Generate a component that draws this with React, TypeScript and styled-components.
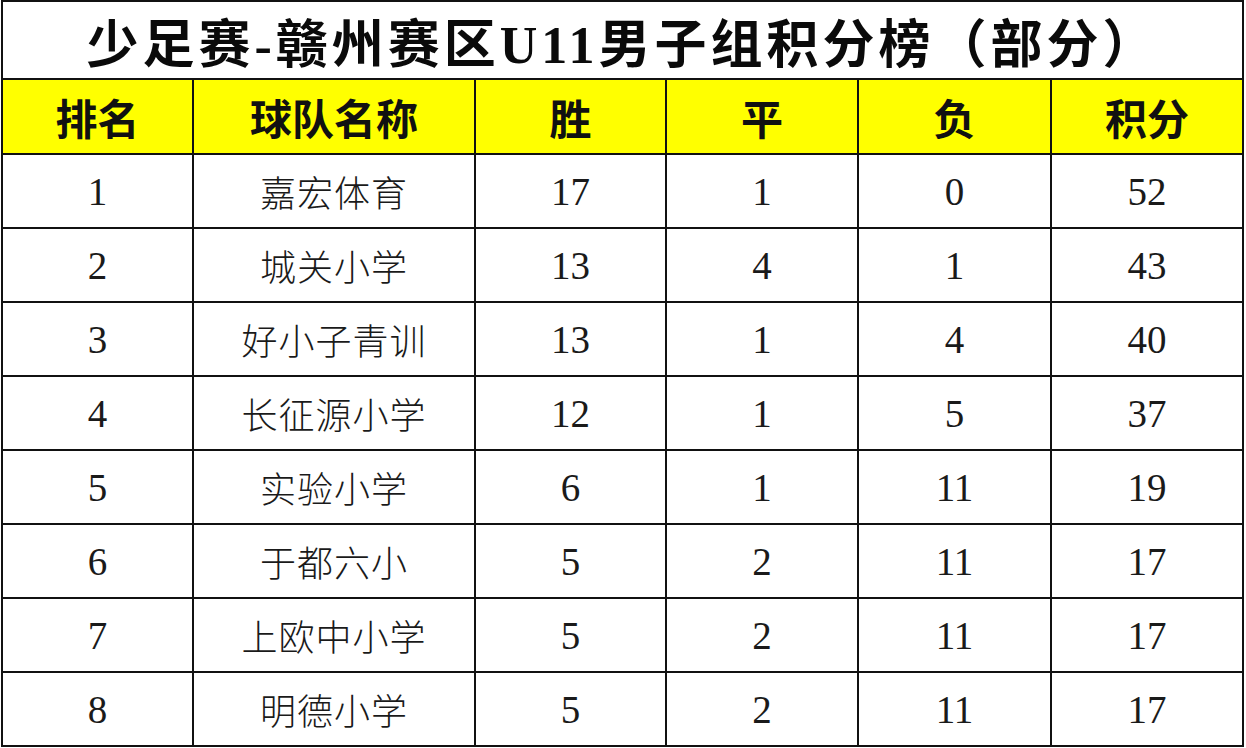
import * as React from 'react';
import styled, { createGlobalStyle } from 'styled-components';

const GlobalStyle = createGlobalStyle`
    html, body {
        margin: 0;
        padding: 0;
        background: #ffffff;
    }
`;

const Page = styled.div`
    padding: 0 0 0 1px;
    width: 1246px;
    height: 748px;
    box-sizing: border-box;
    overflow: hidden;
`;

const Table = styled.table`
    width: 1243px;
    border-collapse: collapse;
    table-layout: fixed;
    border: 2px solid #111;
`;

const TitleCell = styled.th`
    height: 76px;
    padding: 0;
    border: 2px solid #111;
    font-family: "Liberation Serif", "Noto Sans CJK SC", serif;
    font-weight: 700;
    font-size: 52px;
    letter-spacing: 4px;
    color: #0a0a0a;
    text-align: center;
    vertical-align: middle;
`;

const HeadCell = styled.th`
    height: 73px;
    padding: 0;
    border: 2px solid #111;
    background: #ffff00;
    font-family: "Liberation Serif", "Noto Sans CJK SC", serif;
    font-weight: 700;
    font-size: 42px;
    color: #111;
    text-align: center;
    vertical-align: middle;
`;

const Cell = styled.td<{ $cjk?: boolean }>`
    height: 72px;
    padding: 0;
    border: 2px solid #111;
    font-family: ${(p) => (p.$cjk ? '"Noto Sans CJK SC", sans-serif' : '"Liberation Serif", serif')};
    font-weight: ${(p) => (p.$cjk ? 300 : 400)};
    font-size: ${(p) => (p.$cjk ? '36px' : '39px')};
    letter-spacing: ${(p) => (p.$cjk ? '1px' : '0')};
    color: #1a1a1a;
    text-align: center;
    vertical-align: middle;
`;

const widths = [191, 282, 191, 192, 193, 192];
const headers = ['排名', '球队名称', '胜', '平', '负', '积分'];

const rows = [
    { rank: 1, team: '嘉宏体育', win: 17, draw: 1, loss: 0, pts: 52 },
    { rank: 2, team: '城关小学', win: 13, draw: 4, loss: 1, pts: 43 },
    { rank: 3, team: '好小子青训', win: 13, draw: 1, loss: 4, pts: 40 },
    { rank: 4, team: '长征源小学', win: 12, draw: 1, loss: 5, pts: 37 },
    { rank: 5, team: '实验小学', win: 6, draw: 1, loss: 11, pts: 19 },
    { rank: 6, team: '于都六小', win: 5, draw: 2, loss: 11, pts: 17 },
    { rank: 7, team: '上欧中小学', win: 5, draw: 2, loss: 11, pts: 17 },
    { rank: 8, team: '明德小学', win: 5, draw: 2, loss: 11, pts: 17 },
];

export default function App() {
    return (
        <Page>
            <GlobalStyle />
            <Table>
                <colgroup>
                    {widths.map((w, i) => <col key={i} style={{ width: w }} />)}
                </colgroup>
                <thead>
                    <tr>
                        <TitleCell colSpan={6}>少足赛-赣州赛区U11男子组积分榜（部分）</TitleCell>
                    </tr>
                    <tr>
                        {headers.map((h) => <HeadCell key={h}>{h}</HeadCell>)}
                    </tr>
                </thead>
                <tbody>
                    {rows.map((r) => (
                        <tr key={r.rank}>
                            <Cell>{r.rank}</Cell>
                            <Cell $cjk>{r.team}</Cell>
                            <Cell>{r.win}</Cell>
                            <Cell>{r.draw}</Cell>
                            <Cell>{r.loss}</Cell>
                            <Cell>{r.pts}</Cell>
                        </tr>
                    ))}
                </tbody>
            </Table>
        </Page>
    );
}
